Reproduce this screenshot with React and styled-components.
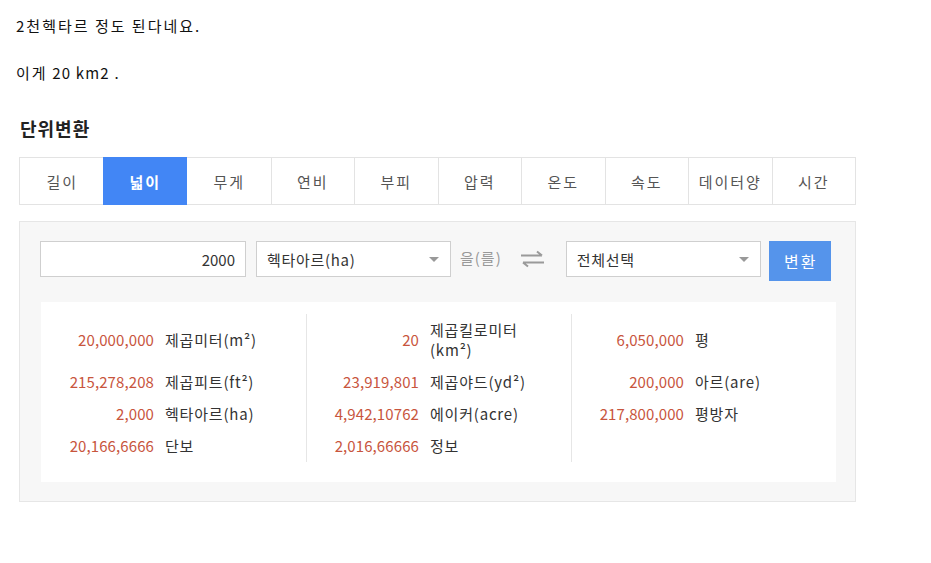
import styled, { createGlobalStyle } from "styled-components";

const GlobalStyle = createGlobalStyle`
  body {
    margin: 0;
    background: #fff;
    font-family: "Noto Sans CJK KR", "Noto Sans", sans-serif;
    color: #222;
  }
`;

const Page = styled.div`
  padding: 15px 0 0 16px;
  width: 840px;
`;

const Para = styled.p`
  margin: 0 0 25px;
  font-size: 15px;
  line-height: 22px;
  color: #111;
  letter-spacing: 1.2px;
`;

const Hangul = styled.span`
  letter-spacing: 2px;
`;

const Widget = styled.div`
  margin: 32px 0 0 3px;
  width: 837px;
`;

const Title = styled.h3`
  margin: 0 0 17px 1px;
  font-size: 18px;
  line-height: 24px;
  font-weight: 700;
  color: #222;
  letter-spacing: 1px;
`;

const Tabs = styled.ul`
  display: grid;
  grid-template-columns: repeat(10, 1fr);
  margin: 0;
  padding: 0;
  list-style: none;
  border: 1px solid #e3e3e3;
  height: 46px;
`;

const Tab = styled.li`
  display: flex;
  align-items: center;
  justify-content: center;
  font-size: 15px;
  letter-spacing: 2px;
  color: ${(p) => (p.$active ? "#fff" : "#555")};
  font-weight: ${(p) => (p.$active ? 700 : 400)};
  background: ${(p) => (p.$active ? "#4286f5" : "#fff")};
  border-left: 1px solid;
  margin: ${(p) => (p.$active ? "-1px 0 -1px -1px" : "0")};
  border-color: ${(p) => (p.$active ? "#4286f5" : p.$first ? "transparent" : "#e3e3e3")};
`;

const Panel = styled.div`
  margin-top: 16px;
  background: #f7f7f7;
  border: 1px solid #e6e6e6;
  padding: 19px 19px 19px 20px;
`;

const Controls = styled.div`
  display: flex;
  align-items: flex-start;
`;

const Field = styled.div`
  box-sizing: border-box;
  width: ${(p) => p.$w}px;
  height: 36px;
  border: 1px solid #cfcfcf;
  background: #fff;
  display: flex;
  align-items: center;
  justify-content: ${(p) => (p.$right ? "flex-end" : "space-between")};
  padding: 0 10px;
  font-size: 15px;
  letter-spacing: ${(p) => (p.$right ? 0 : 0.7)}px;
  color: #333;
  margin-right: ${(p) => p.$mr || 0}px;
`;

const Caret = styled.span`
  width: 0;
  height: 0;
  border-left: 5px solid transparent;
  border-right: 5px solid transparent;
  border-top: 5px solid #999;
  margin-right: 1px;
`;

const Josa = styled.span`
  font-size: 15px;
  letter-spacing: 1px;
  color: #999;
  line-height: 34px;
  margin-right: 18px;
`;

const Swap = styled.span`
  display: flex;
  align-items: center;
  height: 36px;
  margin-right: 21px;
`;

const Button = styled.button`
  width: 62px;
  height: 40px;
  border: 0;
  background: #5594eb;
  color: #fff;
  font-family: inherit;
  font-size: 16px;
  letter-spacing: 2px;
  padding: 0 0 0 2px;
  cursor: pointer;
`;

const Results = styled.div`
  margin: 21px 0 0 1px;
  background: #fff;
  padding: 12px 0 20px;
  display: grid;
  grid-template-columns: repeat(3, 1fr);
  grid-template-rows: repeat(4, auto);
  grid-auto-flow: column;
`;

const Cell = styled.div`
  display: grid;
  grid-template-columns: 112px 1fr;
  column-gap: 11px;
  align-items: center;
  padding: 6px 0;
  border-left: 1px solid ${(p) => (p.$divided ? "#e6e6e6" : "transparent")};
  font-size: 15px;
  line-height: 20px;
`;

const Num = styled.span`
  text-align: right;
  color: #c8553d;
  letter-spacing: 0.1px;
`;

const Unit = styled.span`
  color: #333;
  letter-spacing: 0.8px;
  padding-right: 20px;
`;

const tabs = ["길이", "넓이", "무게", "연비", "부피", "압력", "온도", "속도", "데이터양", "시간"];

const results = [
  [
    ["20,000,000", "제곱미터(m²)"],
    ["215,278,208", "제곱피트(ft²)"],
    ["2,000", "헥타아르(ha)"],
    ["20,166,6666", "단보"],
  ],
  [
    ["20", "제곱킬로미터 (km²)"],
    ["23,919,801", "제곱야드(yd²)"],
    ["4,942,10762", "에이커(acre)"],
    ["2,016,66666", "정보"],
  ],
  [
    ["6,050,000", "평"],
    ["200,000", "아르(are)"],
    ["217,800,000", "평방자"],
    ["", ""],
  ],
];

function SwapIcon() {
  return (
    <svg width="25" height="18" viewBox="0 0 25 18" fill="none" stroke="#9a9a9a" strokeWidth="2">
      <path d="M1 5.5h21M17 1.5l5 4" />
      <path d="M24 12.5H3M8 16.5l-5-4" />
    </svg>
  );
}

export default function App() {
  return (
    <>
      <GlobalStyle />
      <Page>
        <Para>
          <Hangul>2천헥타르 정도 된다네요.</Hangul>
        </Para>
        <Para>
          <Hangul>이게</Hangul> 20 km2 .
        </Para>
        <Widget>
          <Title>단위변환</Title>
          <Tabs>
            {tabs.map((t, i) => (
              <Tab key={t} $active={i === 1} $first={i === 0 || i === 2}>
                {t}
              </Tab>
            ))}
          </Tabs>
          <Panel>
            <Controls>
              <Field $w={206} $right $mr={10}>2000</Field>
              <Field $w={195} $mr={9}>
                헥타아르(ha)
                <Caret />
              </Field>
              <Josa>을(를)</Josa>
              <Swap>
                <SwapIcon />
              </Swap>
              <Field $w={195} $mr={8}>
                전체선택
                <Caret />
              </Field>
              <Button>변환</Button>
            </Controls>
            <Results>
              {results.map((col, ci) =>
                col.map(([n, u], ri) => (
                  <Cell key={`${ci}-${ri}`} $divided={ci > 0}>
                    <Num>{n}</Num>
                    <Unit>{u}</Unit>
                  </Cell>
                ))
              )}
            </Results>
          </Panel>
        </Widget>
      </Page>
    </>
  );
}
